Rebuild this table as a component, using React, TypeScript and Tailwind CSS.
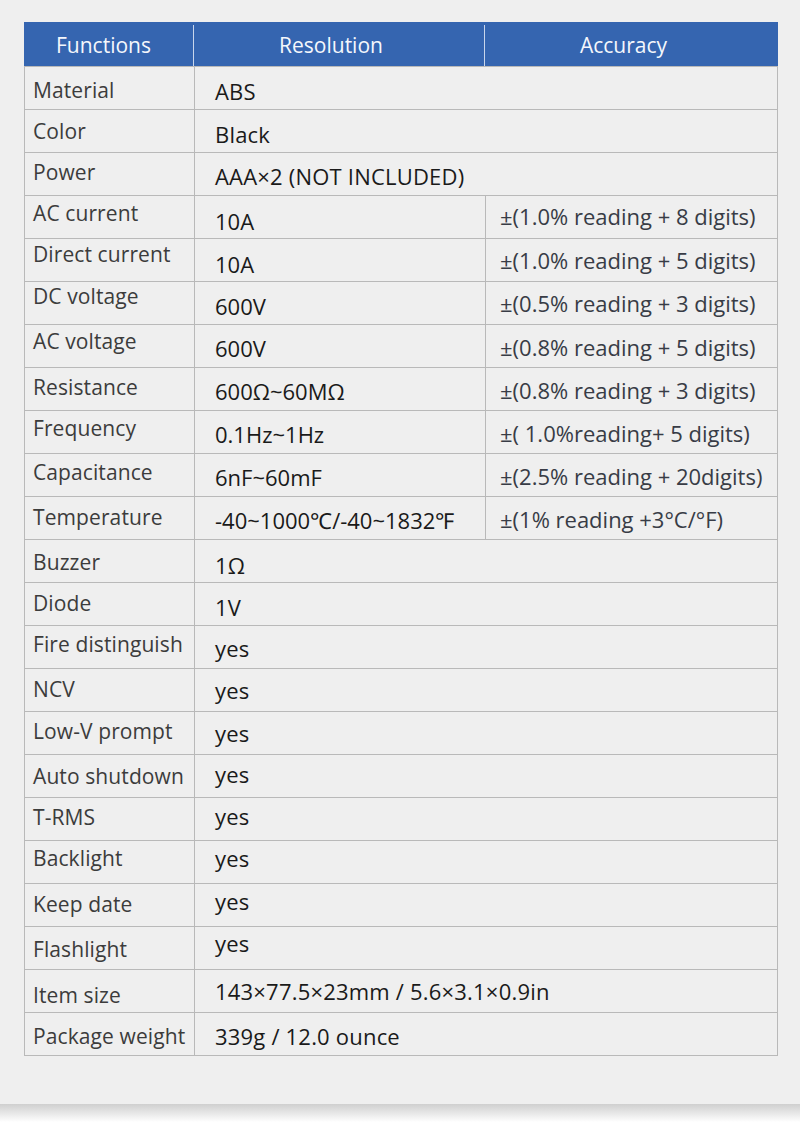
import React from "react"

interface SpecRow {
	label: string
	value: string
	accuracy?: string
	lp: string
	vp: string
	ap?: string
}

const rows: SpecRow[] = [
	{ label: "Material", value: "ABS", lp: "pt-[11px]", vp: "pt-[12px]" },
	{ label: "Color", value: "Black", lp: "pt-[9px]", vp: "pt-[12px]" },
	{ label: "Power", value: "AAA×2 (NOT INCLUDED)", lp: "pt-[7px]", vp: "pt-[11px]" },
	{ label: "AC current", value: "10A", accuracy: "±(1.0% reading + 8 digits)", lp: "pt-[5px]", vp: "pt-[13px]", ap: "pt-[8px]" },
	{ label: "Direct current", value: "10A", accuracy: "±(1.0% reading + 5 digits)", lp: "pt-[3px]", vp: "pt-[13px]", ap: "pt-[9px]" },
	{ label: "DC voltage", value: "600V", accuracy: "±(0.5% reading + 3 digits)", lp: "pt-[2px]", vp: "pt-[12px]", ap: "pt-[9px]" },
	{ label: "AC voltage", value: "600V", accuracy: "±(0.8% reading + 5 digits)", lp: "pt-[4px]", vp: "pt-[11px]", ap: "pt-[10px]" },
	{ label: "Resistance", value: "600Ω~60MΩ", accuracy: "±(0.8% reading + 3 digits)", lp: "pt-[7px]", vp: "pt-[11px]", ap: "pt-[10px]" },
	{ label: "Frequency", value: "0.1Hz~1Hz", accuracy: "±( 1.0%reading+ 5 digits)", lp: "pt-[5px]", vp: "pt-[11px]", ap: "pt-[10px]" },
	{ label: "Capacitance", value: "6nF~60mF", accuracy: "±(2.5% reading + 20digits)", lp: "pt-[6px]", vp: "pt-[11px]", ap: "pt-[10px]" },
	{ label: "Temperature", value: "-40~1000℃/-40~1832℉", accuracy: "±(1% reading +3°C/°F)", lp: "pt-[8px]", vp: "pt-[11px]", ap: "pt-[10px]" },
	{ label: "Buzzer", value: "1Ω", lp: "pt-[10px]", vp: "pt-[13px]" },
	{ label: "Diode", value: "1V", lp: "pt-[8px]", vp: "pt-[12px]" },
	{ label: "Fire distinguish", value: "yes", lp: "pt-[6px]", vp: "pt-[10px]" },
	{ label: "NCV", value: "yes", lp: "pt-[8px]", vp: "pt-[9px]" },
	{ label: "Low-V prompt", value: "yes", lp: "pt-[7px]", vp: "pt-[9px]" },
	{ label: "Auto shutdown", value: "yes", lp: "pt-[9px]", vp: "pt-[7px]" },
	{ label: "T-RMS", value: "yes", lp: "pt-[7px]", vp: "pt-[6px]" },
	{ label: "Backlight", value: "yes", lp: "pt-[5px]", vp: "pt-[5px]" },
	{ label: "Keep date", value: "yes", lp: "pt-[8px]", vp: "pt-[5px]" },
	{ label: "Flashlight", value: "yes", lp: "pt-[10px]", vp: "pt-[4px]" },
	{ label: "Item size", value: "143×77.5×23mm / 5.6×3.1×0.9in", lp: "pt-[13px]", vp: "pt-[9px]" },
	{ label: "Package weight", value: "339g / 12.0 ounce", lp: "pt-[11px]", vp: "pt-[11px]" },
]

export default function App() {
	return (
		<div className="w-[800px] bg-white font-['Open_Sans','Liberation_Sans',sans-serif]">
			<div className="h-[1104px] bg-[#efefef] pl-[24px] pt-[22px]">
				<div className="w-[754px]">
					{/* header */}
					<div className="flex h-[44px] bg-[#3565b0] pt-[3px] text-[21px] text-[#f4f7fc]">
						<div className="flex w-[170px] items-center justify-center border-r border-[#c9d6ec] pr-[10px]">
							Functions
						</div>
						<div className="flex w-[291px] items-center justify-center border-r border-[#c9d6ec] pr-[16px]">
							Resolution
						</div>
						<div className="flex flex-1 items-center justify-center pr-[16px]">
							Accuracy
						</div>
					</div>

					<div className="border-b border-l border-r border-[#b9b9b9]">
						{rows.map((row) => (
							<div key={row.label} className="flex h-[43px] border-t border-[#b9b9b9]">
								<div
									className={`w-[170px] overflow-hidden border-r border-[#b9b9b9] pl-[8px] text-[21px] leading-6 tracking-[0.1px] whitespace-nowrap text-[#3c3c3c] ${row.lp}`}
								>
									{row.label}
								</div>
								{row.accuracy ? (
									<>
										<div
											className={`w-[291px] border-r border-[#b9b9b9] pl-[20px] text-[22px] leading-6 font-medium whitespace-nowrap text-[#1a1a1a] ${row.vp}`}
										>
											{row.value}
										</div>
										<div
											className={`flex-1 pl-[14px] text-[22px] leading-6 whitespace-nowrap text-[#383c46] ${row.ap}`}
										>
											{row.accuracy}
										</div>
									</>
								) : (
									<div
										className={`flex-1 pl-[20px] text-[22px] leading-6 font-medium tracking-[0.2px] whitespace-nowrap text-[#1a1a1a] ${row.vp}`}
									>
										{row.value}
									</div>
								)}
							</div>
						))}
					</div>
				</div>
			</div>
			<div className="h-[18px] bg-gradient-to-b from-[#cfcfcf] to-white" />
			<div className="h-[23px] bg-white" />
		</div>
	)
}
